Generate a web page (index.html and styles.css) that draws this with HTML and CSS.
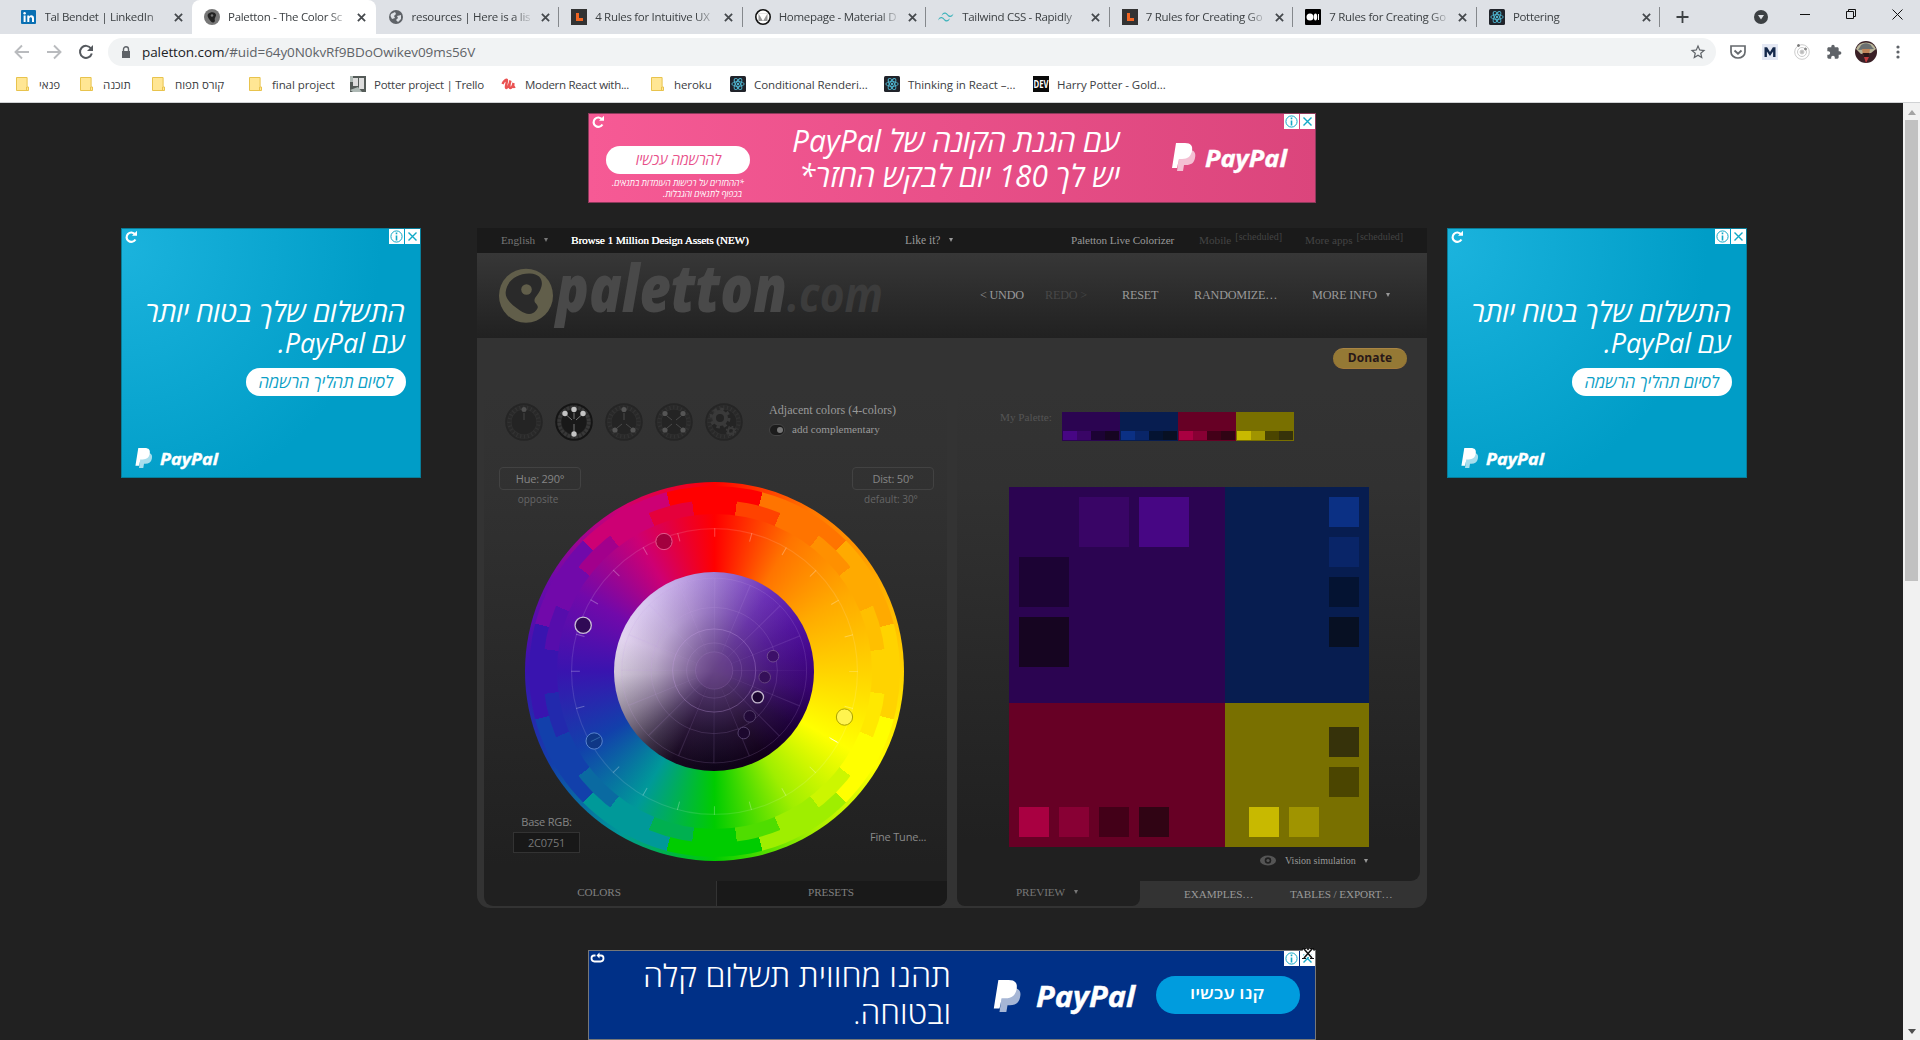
FILE: index.html
```html
<!DOCTYPE html>
<html lang="en">
<head>
<meta charset="utf-8">
<title>Paletton - The Color Scheme Designer</title>
<link rel="stylesheet" href="styles.css">
</head>
<body>
<svg class="defs" width="0" height="0">
  <symbol id="react" viewBox="0 0 16 16"><rect width="16" height="16" rx="1.500" fill="#20232a"/><g fill="none" stroke="#4fb6d0" stroke-width=".9"><ellipse cx="8" cy="8" rx="6.200" ry="2.400"/><ellipse cx="8" cy="8" rx="6.200" ry="2.400" transform="rotate(60 8 8)"/><ellipse cx="8" cy="8" rx="6.200" ry="2.400" transform="rotate(120 8 8)"/></g><circle cx="8" cy="8" r="1.200" fill="#4fb6d0"/></symbol>
  <symbol id="learnui" viewBox="0 0 16 16"><rect width="16" height="16" fill="#333"/><path d="M5 4h3v5h4v3H5z" fill="#f26522"/></symbol>
  <symbol id="cross" viewBox="0 0 8 8"><path d="M.8.8l6.400 6.400M7.200.8L.8 7.200" stroke="#45494d" stroke-width="1.600" fill="none"/></symbol>
  <symbol id="folder" viewBox="0 0 13 15"><path d="M.5 1h10.600v9.500h1.400v3.500H.5z" fill="#ffe694" stroke="#e8c34d"/><path d="M10.500 14v-3.500" stroke="#e8c34d"/></symbol>
  <symbol id="pp" viewBox="0 0 24 28"><path d="M8 7h11c4 1 5 4 4 8-1 5-4 7-9 7h-2l-1 6H5z" fill="#fff" opacity=".65"/><path d="M4 0h9c6 0 8 3 7 8s-4 8-10 8H7L5 25H0z" fill="#fff"/></symbol>
  <symbol id="adchoice" viewBox="0 0 31 15"><path d="M0 0h15v15H0zM16 0h15v15H16z" fill="#fff"/><g fill="none" stroke="#12a9c7"><circle cx="7.500" cy="7.500" r="5.600"/><path d="M19.500 3.500l8 8M27.500 3.500l-8 8" stroke-width="1.400"/><path d="M7.500 6.500v5M7.500 3.500v1.700" stroke-width="1.600"/></g></symbol>
  <symbol id="replay" viewBox="0 0 14 14"><path d="M11 4.300A4.700 4.700 0 1 0 11.400 9.500" fill="none" stroke="#fff" stroke-width="2.200"/><path d="M13 .8v5H8z" fill="#fff"/></symbol>
  <symbol id="dial" viewBox="-19 -19 38 38"><circle r="17.800" fill="none" stroke="#252525" stroke-width="2"/><circle r="14.800" fill="none" stroke="#292929" stroke-width="3.600" stroke-dasharray="2.600 1.270"/><circle r="12.500" fill="#242424"/></symbol>
</svg>

<header class="chrome">
  <div class="tabstrip">
    <div class="tab"><svg class="fav"><rect y="1" width="15" height="14" rx="1" fill="#0a70b3"/><circle cx="3.600" cy="4.300" r="1.200" fill="#fff"/><path d="M2.600 6.500h2V13h-2zM6.300 6.500h1.900v1c1.300-2 4.800-1.500 4.800 1.700V13h-2V9.700c0-2-2.700-2-2.700 0V13h-2z" fill="#fff"/></svg><span class="title">Tal Bendet | LinkedIn</span><svg class="x"><use href="#cross"/></svg></div>
    <div class="tab active"><svg class="fav"><circle cx="8" cy="8" r="8" fill="#777"/><path d="M4 5c3-3 8-2 8 1 0 2-2 3-1 6-2 3-4 1-6-2-1-2-2-3-1-5z" fill="#222"/><circle cx="8" cy="6.500" r="1.300" fill="#777"/></svg><span class="title">Paletton - The Color Sc</span><svg class="x"><use href="#cross"/></svg></div>
    <div class="tab sep"><svg class="fav"><circle cx="8" cy="8" r="7" fill="#5f6368"/><path d="M3 5l4-2 1 2-2 2 1 2-3 1-1.500-3zM9 7l4-1v4l-3 3-2-2 2-2z" fill="#dee1e6"/></svg><span class="title">resources | Here is a lis</span><svg class="x"><use href="#cross"/></svg></div>
    <div class="tab sep"><svg class="fav"><use href="#learnui"/></svg><span class="title">4 Rules for Intuitive UX</span><svg class="x"><use href="#cross"/></svg></div>
    <div class="tab sep"><svg class="fav"><circle cx="8" cy="8" r="7.200" fill="#fff" stroke="#111" stroke-width="1.600"/><path d="M3.500 4.500h9V12h-9z" fill="#999"/><path d="M3.500 4.500h9L8 12z" fill="#fff"/></svg><span class="title">Homepage - Material D</span><svg class="x"><use href="#cross"/></svg></div>
    <div class="tab sep"><svg class="fav"><path d="M3.500 7c1-4 4-4.500 6-2s4 2 6-.5c-1 4-4 4.500-6 2s-4-2-6 .5zM0 11.500c1-4 4-4.500 6-2s4 2 6-.5c-1 4-4 4.500-6 2s-4-2-6 .5z" fill="#3db3bb"/></svg><span class="title">Tailwind CSS - Rapidly</span><svg class="x"><use href="#cross"/></svg></div>
    <div class="tab sep"><svg class="fav"><use href="#learnui"/></svg><span class="title">7 Rules for Creating Go</span><svg class="x"><use href="#cross"/></svg></div>
    <div class="tab sep"><svg class="fav"><rect width="16" height="16" rx="1" fill="#000"/><circle cx="5" cy="8" r="3.500" fill="#fff"/><ellipse cx="10.500" cy="8" rx="1.700" ry="3.400" fill="#fff"/><path d="M13.500 5v6" stroke="#fff"/></svg><span class="title">7 Rules for Creating Go</span><svg class="x"><use href="#cross"/></svg></div>
    <div class="tab sep"><svg class="fav"><use href="#react"/></svg><span class="title">Pottering</span><svg class="x"><use href="#cross"/></svg></div>
    <svg class="wctl" width="259" height="34" fill="none" stroke="#111"><path d="M16.500 17h12M22.500 11v12" stroke="#3c4043" stroke-width="1.800"/><circle cx="101" cy="17" r="7" fill="#3c4043" stroke="none"/><path d="M98 15h6l-3 4.500z" fill="#dee1e6" stroke="none"/><path d="M140 14.500h10M186.500 11.500h7v7h-7zM188.500 11.500v-2h7v7h-2M232.500 9.500l10 10M242.500 9.500l-10 10"/></svg>
  </div>
  <div class="toolbar">
    <svg class="nav" width="108" height="36" fill="none" stroke="#b9bbbe" stroke-width="1.900"><path d="M29 18H16.500M22 11.500L15.500 18l6.500 6.500M47 18h12.500M54 11.500l6.500 6.500-6.500 6.500"/><path d="M91 14.500a6 6 0 1 0 .8 5" stroke="#55595e" stroke-width="2"/><path d="M93 11v6h-6z" fill="#55595e" stroke="none"/></svg>
    <div class="omnibox">
      <svg width="10" height="13"><path d="M1 5h8v7H1z" fill="#5f6368"/><path d="M2.500 5V3.300a2.500 2.500 0 0 1 5 0V5" fill="none" stroke="#5f6368" stroke-width="1.400"/></svg>
      <span class="url"><b>paletton.com</b>/#uid=64y0N0kvRf9BDoOwikev09ms56V</span>
      <svg class="star" width="18" height="18" viewBox="0 0 24 24"><path fill="#5f6368" d="M22 9.240l-7.190-.62L12 2 9.190 8.630 2 9.240l5.460 4.730L5.820 21 12 17.270 18.180 21l-1.630-7.030L22 9.240zM12 15.400l-3.760 2.270 1-4.280-3.320-2.880 4.380-.38L12 6.100l1.710 4.040 4.380.38-3.320 2.880 1 4.280L12 15.400z"/></svg>
    </div>
    <div class="ext">
      <svg viewBox="0 0 16 16"><path d="M1 2h14v6a7 6 0 0 1-14 0z" fill="none" stroke="#666a6e" stroke-width="1.700"/><path d="M4.500 6.500L8 9.700l3.500-3.200" fill="none" stroke="#666a6e" stroke-width="1.900"/></svg>
      <svg viewBox="0 0 16 16"><path d="M0 0h16v16H0z" fill="#e4e8f4"/><path d="M2.500 13V3.200h2.600L8 8l2.900-4.800h2.600V13h-2.400V7.500L8 12 4.900 7.500V13z" fill="#14284a"/></svg>
      <svg viewBox="0 0 16 16" fill="none" stroke="#ccc"><circle cx="8" cy="8" r="7.300"/><circle cx="8" cy="8" r="4.500"/><circle cx="8" cy="8" r="2" fill="#bbb"/><circle cx="4.500" cy="1.500" r="1" fill="#777" stroke="#777"/><circle cx="11.500" cy="5" r="1" fill="#888" stroke="#888"/></svg>
      <svg viewBox="0 0 24 24"><path fill="#5f6368" d="M20.500 11H19V7c0-1.100-.9-2-2-2h-4V3.500C13 2.120 11.880 1 10.500 1S8 2.120 8 3.500V5H4c-1.100 0-2 .9-2 2v3.800h1.500c1.490 0 2.700 1.210 2.700 2.700s-1.210 2.700-2.700 2.700H2V20c0 1.100.9 2 2 2h3.800v-1.500c0-1.490 1.210-2.700 2.700-2.700s2.700 1.210 2.700 2.700V22H17c1.100 0 2-.9 2-2v-4h1.500c1.380 0 2.500-1.120 2.500-2.500S21.880 11 20.500 11z"/></svg>
      <svg class="avatar" viewBox="0 0 22 22"><circle cx="11" cy="11" r="11" fill="#3a2026"/><path d="M1 8A11 11 0 0 1 21 8l-5 4-10 1z" fill="#b9b69a"/><path d="M5 6c2-5 10-5 12 0l2 2-16 1z" fill="#6b6f70"/><path d="M7 8h8l-1 6-3 2-3-2z" fill="#c08458"/><path d="M7.500 12h7l-1 4-2.500 1-2-1z" fill="#2c1718"/><path d="M9 16l2 6 3-6z" fill="#c23b3f"/></svg>
      <svg viewBox="0 0 16 16" fill="#5f6368"><circle cx="8" cy="3" r="1.600"/><circle cx="8" cy="8" r="1.600"/><circle cx="8" cy="13" r="1.600"/></svg>
    </div>
  </div>
  <nav class="bookmarks">
    <a><svg><use href="#folder"/></svg>פנאי</a>
    <a><svg><use href="#folder"/></svg>תוכנה</a>
    <a><svg><use href="#folder"/></svg>קורס תפוח</a>
    <a><svg><use href="#folder"/></svg>final project</a>
    <a class="wide"><svg><rect width="16" height="16" fill="#545b58"/><path d="M3 2h5v8H3zM9 2h5v11H9z" fill="#ddd"/><path d="M0 0h3v6H0zM0 14l8-3 4 5H3z" fill="#aeb9b5"/></svg>Potter project | Trello</a>
    <a class="wide tight"><svg><path d="M1.500 8C3 4.500 6 2.500 6 4.500S4 12 5.500 12 8 9.500 9 6.500M9.500 4.500C8 9 8 12 9.500 12s2.500-3 3-5c-.5 3-.5 5 1.500 3.500" fill="none" stroke="#ea5252" stroke-width="2.400"/></svg>Modern React with...</a>
    <a><svg><use href="#folder"/></svg>heroku</a>
    <a class="wide"><svg><use href="#react"/></svg>Conditional Renderi...</a>
    <a class="wide"><svg><use href="#react"/></svg>Thinking in React –...</a>
    <a class="wide"><svg><rect width="16" height="16" fill="#0a0a0a"/><text x=".5" y="12" class="dev" textLength="15" lengthAdjust="spacingAndGlyphs">DEV</text></svg>Harry Potter - Gold...</a>
  </nav>
</header>

<div class="viewport">
<main class="page">
  <svg class="ad leader" width="728" height="90">
    <defs><linearGradient id="pink"><stop offset="0" stop-color="#f65a95"/><stop offset="1" stop-color="#db457c"/></linearGradient></defs>
    <rect x=".5" y=".5" width="727" height="89" fill="url(#pink)" stroke="#8c3a5b"/>
    <use href="#replay" x="3" y="2" width="14" height="14"/>
    <rect x="18" y="33" width="144" height="28" rx="14" fill="#fff"/>
    <g class="he"><text x="133" y="51.500" font-size="15" fill="#e84f8a" textLength="85" lengthAdjust="spacingAndGlyphs">להרשמה עכשיו</text>
    <text x="156" y="73" font-size="9" textLength="132" lengthAdjust="spacingAndGlyphs">*ההחזרים על רכישות העומדות בתנאים.</text>
    <text x="154" y="84" font-size="9" textLength="79" lengthAdjust="spacingAndGlyphs">בכפוף לתנאים והגבלות.</text>
    <text x="532" y="39" font-size="31" textLength="328" lengthAdjust="spacingAndGlyphs">עם הגנת הקונה של PayPal</text>
    <text x="532" y="74" font-size="31" textLength="321" lengthAdjust="spacingAndGlyphs">יש לך 180 יום לבקש החזר*</text></g>
    <use href="#pp" x="584" y="30" width="24" height="28"/>
    <text class="pay" x="617" y="53.500" font-size="24" textLength="82" lengthAdjust="spacingAndGlyphs">PayPal</text>
    <use href="#adchoice" x="696" y="1" width="31" height="15"/>
  </svg>

  <div class="row">
    <svg class="ad" width="300" height="250">
      <defs><radialGradient id="cyan" gradientUnits="userSpaceOnUse" cx="0" cy="20" r="260"><stop offset="0" stop-color="#1bb3dd"/><stop offset="1" stop-color="#009dc7"/></radialGradient></defs>
      <g id="box-ad">
      <rect x=".5" y=".5" width="299" height="249" fill="url(#cyan)" stroke="#087d99"/>
      <use href="#replay" x="3" y="2" width="14" height="14"/>
      <rect x="125" y="140" width="160" height="28" rx="14" fill="#fff"/>
      <g class="he"><text x="284" y="94" font-size="28" textLength="260" lengthAdjust="spacingAndGlyphs">התשלום שלך בטוח יותר</text>
      <text x="284" y="125" font-size="28" textLength="127" lengthAdjust="spacingAndGlyphs">עם PayPal.</text>
      <text x="272" y="159.500" font-size="17" fill="#0d9fc6" textLength="134" lengthAdjust="spacingAndGlyphs">לסיום תהליך הרשמה</text></g>
      <use href="#pp" x="14" y="220" width="18" height="20"/>
      <text class="pay" x="39" y="236.500" font-size="16.500" textLength="58" lengthAdjust="spacingAndGlyphs">PayPal</text>
      <use href="#adchoice" x="268" y="1" width="31" height="15"/>
      </g>
    </svg>

    <section class="app">
      <div class="topmenu">
        <span class="m-lang">English<i class="caret"></i></span>
        <span class="m-new">Browse 1 Million Design Assets (NEW)</span>
        <span class="m-like">Like it?<i class="caret"></i></span>
        <span class="m-live">Paletton Live Colorizer</span>
        <span class="m-mob">Mobile<sup>[scheduled]</sup></span>
        <span class="m-apps">More apps<sup>[scheduled]</sup></span>
      </div>
      <div class="head">
        <svg class="logo" width="400" height="85">
          <circle cx="27" cy="42.700" r="27" fill="#615e4a"/>
          <path d="M6.700 39C8 27 19 20 31 20.500c12 .5 14 9 10 17-3 6-7 8-5 12 3 3 4 5 1 8-3 4-9 5-16 0C12 51 6 46 6.700 39z" fill="#2a2a2a"/>
          <circle cx="27.500" cy="36.500" r="5.300" fill="#615e4a"/>
          <text class="logotext" x="57" y="58.500" textLength="231" lengthAdjust="spacingAndGlyphs">paletton</text>
          <text class="logotext dim" x="288" y="58.500" textLength="96" lengthAdjust="spacingAndGlyphs">.com</text>
        </svg>
        <span class="h-undo">&lt; UNDO</span><span class="h-redo">REDO &gt;</span><span class="h-reset">RESET</span><span class="h-rand">RANDOMIZE…</span><span class="h-more">MORE INFO<i class="caret"></i></span>
      </div>
      <div class="body">
        <div class="donate-row"><span class="donate">Donate</span></div>
        <div class="panels">
          <div class="panel left">
            <div class="schemes">
              <svg viewBox="-19 -19 38 38"><use href="#dial" x="-19" y="-19" width="38" height="38"/><path d="M-.5-9h1V-2h-1z" fill="#444"/><circle cy="-12.500" r="2.500" fill="#505050"/></svg>
              <svg viewBox="-19 -19 38 38"><circle r="17.800" fill="#292929" stroke="#151515" stroke-width="2"/><circle r="14.800" fill="none" stroke="#383838" stroke-width="3.600" stroke-dasharray="2.600 1.270"/><circle r="12.500" fill="#191919"/><path d="M0-9V-3M0 2V10M-7-6.500l5 4.500M7-6.500L2-2" stroke="#777"/><g fill="#c4c4c4"><circle cy="-12.500" r="2.700"/><circle cx="-9" cy="-8.500" r="2.700"/><circle cx="9" cy="-8.500" r="2.700"/><circle cy="12" r="2.700"/></g></svg>
              <svg viewBox="-19 -19 38 38"><use href="#dial" x="-19" y="-19" width="38" height="38"/><path d="M0-9V-2M-7 6l5-4M7 6L2 2" stroke="#4a4a4a"/><g fill="#555"><circle cy="-12.500" r="2.600"/><circle cx="-9" cy="8" r="2.600"/><circle cx="9" cy="8" r="2.600"/></g></svg>
              <svg viewBox="-19 -19 38 38"><use href="#dial" x="-19" y="-19" width="38" height="38"/><path d="M-7-6l5 4M7-6L2-2M-7 6l5-4M7 6L2 2" stroke="#4a4a4a"/><g fill="#555"><circle cx="-9" cy="-8.500" r="2.600"/><circle cx="9" cy="-8.500" r="2.600"/><circle cx="-9" cy="8" r="2.600"/><circle cx="9" cy="8" r="2.600"/></g></svg>
              <svg viewBox="-19 -19 38 38"><use href="#dial" x="-19" y="-19" width="38" height="38"/><g fill="none" stroke="#3a3a3a"><circle cx="-4" cy="-4" r="6" stroke-width="4"/><circle cx="-4" cy="-4" r="9" stroke-width="3" stroke-dasharray="3.500 3.568"/><circle cx="7" cy="9" r="3" stroke-width="2"/><circle cx="7" cy="9" r="4.500" stroke-width="1.500" stroke-dasharray="1.800 1.734"/></g></svg>
              <div class="desc"><p>Adjacent colors (4-colors)</p><p class="comp"><i class="toggle"></i>add complementary</p></div>
            </div>
            <div class="wheel-area">
              <div class="corner tl"><span class="box">Hue: 290°</span><small>opposite</small></div>
              <div class="corner tr"><span class="box">Dist: 50°</span><small>default: 30°</small></div>
              <div class="corner bl"><label>Base RGB:</label><span class="input">2C0751</span></div>
              <div class="corner br">Fine Tune...</div>
              <div class="wheel">
                <div class="ring r12"></div><div class="ring r24"></div><div class="ring inner"></div><div class="ring disc"></div>
                <svg class="ring over" viewBox="102 95 1140 1140">
                  <circle cx="672" cy="665" r="430" fill="none" stroke="#fff" stroke-opacity=".12" stroke-width="3.500"/>
                  <circle cx="672" cy="665" r="418" fill="none" stroke="#fff" stroke-opacity=".28" stroke-width="26" stroke-dasharray="3 106.431" stroke-dashoffset="1.500"/>
                  <g fill="none" stroke="#c9a4e8" stroke-opacity=".17" stroke-width="3"><circle cx="671" cy="662" r="56" fill="#8050a0" fill-opacity=".22"/><circle cx="671" cy="662" r="83"/><circle cx="671" cy="662" r="125" stroke-opacity=".32"/><circle cx="671" cy="662" r="190"/><circle cx="671" cy="662" r="278"/>
                  <circle cx="671" cy="662" r="167" stroke-width="222" stroke-opacity=".14" stroke-dasharray="2.500 63.080" stroke-dashoffset="1.250"/></g>
                  <g stroke-width="3"><circle cx="277" cy="526" r="24.500" fill="#300a56" stroke="#c9bcd6" stroke-width="4"/><circle cx="520" cy="274" r="24.500" fill="#a3003e" stroke="#e45b8e"/><circle cx="310" cy="874" r="24.500" fill="#0f3786" stroke="#5a86cf"/><path d="M300 876l28-14" stroke="#2f66a8"/><circle cx="1063" cy="802" r="24.500" fill="#fff44f" stroke="#a9a000"/><path d="M1018 864l24 14" stroke="#fff" stroke-opacity=".8"/>
                  <circle cx="848" cy="619" r="17.500" fill="#3d1069" stroke="#6f4a92"/><circle cx="823" cy="682" r="17.500" fill="#351059" stroke="#64447f"/><circle cx="802" cy="742" r="17.500" fill="#1b0630" stroke="#c0b4cb" stroke-width="4"/><circle cx="778" cy="800" r="17.500" fill="#220a38" stroke="#54406a"/><circle cx="760" cy="850" r="17.500" fill="#1c082e" stroke="#54406a"/></g>
                </svg>
              </div>
            </div>
            <div class="ltabs"><span>COLORS</span><span class="off">PRESETS</span></div>
          </div>
          <div class="rightcol">
            <div class="panel right">
              <div class="mypal"><span>My Palette:</span>
                <div class="chip pu"><i></i><i></i><i></i><i></i></div><div class="chip bl2"><i></i><i></i><i></i><i></i></div><div class="chip re"><i></i><i></i><i></i><i></i></div><div class="chip ye"><i></i><i></i><i></i><i></i></div>
              </div>
              <div class="preview">
                <div class="q pu"><i></i><i></i><i></i><i></i></div><div class="q bl2"><i></i><i></i><i></i><i></i></div><div class="q re"><i></i><i></i><i></i><i></i></div><div class="q ye"><i></i><i></i><i></i><i></i></div>
              </div>
              <div class="vision"><svg width="16" height="11"><ellipse cx="8" cy="5.500" rx="8" ry="5" fill="#555"/><circle cx="8" cy="5.500" r="3.300" fill="#202020"/><circle cx="8" cy="5.500" r="1.600" fill="#555"/></svg><span>Vision simulation</span><i class="caret"></i></div>
            </div>
            <div class="rtabs"><span class="on">PREVIEW<i class="caret"></i></span><span class="t-ex">EXAMPLES…</span><span class="t-tab">TABLES / EXPORT…</span></div>
          </div>
        </div>
      </div>
    </section>

    <svg class="ad second" width="300" height="250"><use href="#box-ad"/></svg>
  </div>

  <svg class="ad bottom" width="728" height="90">
    <rect x=".5" y=".5" width="727" height="89" fill="#003087" stroke="#777"/>
    <path d="M7.500 5.500H6c-2 0-2.500 1-2.500 2.800 0 2.200 1 3.200 3 3.200h6c2 0 3-1 3-3.200 0-1.800-.5-2.800-2.500-2.800h-2" fill="none" stroke="#fff" stroke-width="1.800"/><path d="M11.500 2.500v6l-3-3z" fill="#fff"/>
    <g class="he up"><text x="363" y="36.500" font-size="31" textLength="308" lengthAdjust="spacingAndGlyphs">תהנו מחווית תשלום קלה</text>
    <text x="363" y="74" font-size="31" textLength="98" lengthAdjust="spacingAndGlyphs">ובטוחה.</text></g>
    <use href="#pp" x="405" y="30" width="29" height="32"/>
    <text class="pay" x="448" y="56.500" font-size="28" textLength="99" lengthAdjust="spacingAndGlyphs">PayPal</text>
    <rect x="568" y="26" width="144" height="38" rx="19" fill="#009cde"/>
    <g class="he up"><text x="676" y="49" font-size="16" textLength="74" font-weight="600" lengthAdjust="spacingAndGlyphs">קנו עכשיו</text></g>
    <use href="#adchoice" x="696" y="1" width="31" height="15"/>
    <path d="M716-1l8 9M724-1l-8 9" stroke="#fff" stroke-width="4"/><path d="M716-1l8 9M724-1l-8 9" stroke="#111" stroke-width="1.600"/><path d="M714-1.500h4M722-1.500h4M714 8.500h4M722 8.500h4" stroke="#111"/>
  </svg>
</main>
<div class="scrollbar"><i class="up"></i><i class="thumb"></i><i class="down"></i></div>
</div>
</body>
</html>
```
FILE: styles.css
```css
* { box-sizing: border-box; }
body { margin: 0; width: 1920px; height: 1040px; overflow: hidden; display: flex; flex-direction: column; font-family: "Open Sans", "Noto Sans", sans-serif; font-size: 12px; background: #212121; }
.defs { position: absolute; }
p { margin: 0; }

/* browser frame */
.chrome { height: 103px; background: #fff; border-bottom: 1px solid #d0d2d4; color: #3c4043; flex: none; }
.tabstrip { height: 34px; background: #dee1e6; display: flex; padding-left: 8.500px; }
.tab { width: 183.550px; height: 34px; display: flex; align-items: center; padding: 0 11px 0 12px; position: relative; flex: none; }
.tab .fav { width: 16px; height: 16px; margin-right: 8px; flex: none; }
.tab .title { width: 123px; white-space: nowrap; overflow: hidden; font-size: 11.500px; letter-spacing: -.3px; flex: none; margin-right: 6px; line-height: 20px; mask-image: linear-gradient(90deg, #000 82%, transparent 99%); }
.tab .x { width: 9px; height: 9px; flex: none; }
.tab.active { background: #fff; border-radius: 8px 8px 0 0; }
.tab.sep::after { content: ""; position: absolute; right: 0; top: 7px; height: 20px; width: 1px; background: #85888c; }
.wctl { flex: none; }
.toolbar { height: 36px; display: flex; align-items: center; }
.omnibox { width: 1608px; height: 28px; background: #f1f3f4; border-radius: 14px; display: flex; align-items: center; padding: 0 9px 0 13px; }
.omnibox svg { width: 10px; }
.url { margin-left: 11px; font-size: 13.500px; letter-spacing: -.09px; line-height: 18px; padding-bottom: 1px; color: #5f6368; flex: 1; }
.url b { font-weight: 400; color: #202124; }
.omnibox .star { width: 18px; }
.ext { display: flex; align-items: center; gap: 16px; margin-left: 14px; }
.ext svg { width: 16px; height: 16px; }
.ext .avatar { width: 22px; height: 22px; margin: 0 -3px; }
.bookmarks { height: 32px; display: flex; align-items: center; padding-left: 16px; padding-bottom: 4px; font-size: 11.500px; letter-spacing: -.07px; white-space: nowrap; }
.bookmarks a { display: flex; align-items: center; flex: none; width: 64px; }
.bookmarks svg { width: 13px; height: 16px; margin-right: 10px; flex: none; }
.bookmarks .wide svg { width: 16px; margin-right: 8px; }
.bookmarks .tight { letter-spacing: -.3px; }
.bookmarks a:nth-child(2) { width: 72px; }
.bookmarks a:nth-child(3) { width: 97px; }
.bookmarks a:nth-child(4) { width: 101px; }
.bookmarks a:nth-child(5) { width: 151px; letter-spacing: -.28px; }
.bookmarks a:nth-child(6) { width: 150px; }
.bookmarks a:nth-child(7) { width: 79px; }
.bookmarks a:nth-child(8) { width: 154px; }
.bookmarks a:nth-child(9) { width: 149px; }
.bookmarks a:nth-child(10) { width: 150px; }
.dev { font-size: 10px; font-weight: 700; fill: #fff; letter-spacing: 0; }

/* page */
.viewport { display: flex; flex: 1; min-height: 0; }
.page { flex: 1; padding-top: 10px; background: #212121; overflow: hidden; }
.ad { display: block; flex: none; }
.leader, .bottom { margin-left: 588px; }
.bottom { margin-top: 42px; overflow: visible; }
.row { display: flex; align-items: flex-start; margin: 25px 0 0 121px; }
.second { margin-left: 20px; }
.he { direction: rtl; font-family: "Open Sans", "DejaVu Sans", sans-serif; font-style: italic; fill: #fff; }
.he.up { font-style: normal; font-weight: 300; }
.pay { font-weight: 700; font-style: italic; fill: #fff; stroke: #fff; stroke-width: .4px; }
.scrollbar { width: 17px; background: #f1f1f1; display: flex; flex-direction: column; align-items: center; }
.scrollbar .up { border: 4px solid transparent; border-bottom: 5px solid #a3a3a3; border-top: 0; margin: 7px 0 5px; }
.scrollbar .thumb { width: 13px; height: 461px; background: #c1c1c1; }
.scrollbar .down { border: 4px solid transparent; border-top: 5px solid #505050; border-bottom: 0; margin: auto 0 6px; }

/* application */
.app { width: 950px; height: 680px; margin-left: 56px; flex: none; font-family: "Liberation Serif", serif; color: #999; }
.caret { display: inline-block; border: 2.500px solid transparent; border-top: 4px solid currentColor; border-bottom: 0; vertical-align: 2px; margin-left: 9px; }
.topmenu { height: 25px; background: #1a1a1a; display: flex; align-items: center; padding: 0 0 1px 24px; font-size: 11.200px; white-space: nowrap; }
.topmenu span { flex: none; }
.topmenu .m-lang { width: 70px; color: #777; }
.topmenu .m-new { width: 334px; color: #fff; text-shadow: .3px 0 #fff; letter-spacing: -.08px; }
.topmenu .m-like { width: 166px; font-size: 11.500px; }
.topmenu .m-live { width: 128px; letter-spacing: -.08px; }
.topmenu .m-mob { width: 106px; color: #444; }
.topmenu .m-apps { color: #444; }
sup { font-size: 10px; vertical-align: 4px; line-height: 0; margin-left: 4px; }
.head { height: 85px; background: linear-gradient(#373737, #212121); display: flex; align-items: center; padding-left: 22px; font-size: 12.200px; white-space: nowrap; letter-spacing: -.2px; }
.logo { margin-right: 81px; flex: none; }
.logotext { font: italic 800 66px "Open Sans", sans-serif; fill: #494949; letter-spacing: 0; }
.logotext.dim { fill: #3c3c3c; font-size: 49px; font-weight: 700; }
.head span { flex: none; }
.h-undo { width: 65px; }
.h-redo { width: 77px; color: #484848; }
.h-reset { width: 72px; }
.h-rand { width: 118px; }
.body { height: 570px; background: #333; border-radius: 0 0 13px 13px; padding: 10px 7px 0; }
.donate-row { display: flex; justify-content: flex-end; padding-right: 13px; height: 42px; }
.donate { width: 74px; height: 21px; border-radius: 10.500px; background: #957935; border-top: 1px solid #a98544; border-bottom: 1px solid #a5793a; color: #281818; font: 700 12px/18px "Open Sans", sans-serif; letter-spacing: .1px; text-align: center; }
.panels { display: flex; gap: 10px; height: 516px; }
.panel { background: linear-gradient(#333, #313131 20%, #202020 92%); }
.left { width: 463px; height: 516px; border-radius: 0 0 9px 9px; overflow: hidden; font-size: 12px; }
.schemes { height: 73px; padding: 13px 0 0 21px; display: flex; gap: 12px; }
.schemes svg { width: 38px; height: 38px; flex: none; }
.desc { margin-left: 14px; font-size: 12.100px; white-space: nowrap; }
.desc p { line-height: 14px; }
.desc .comp { font-size: 11.100px; line-height: 16px; margin-top: 4px; display: flex; align-items: center; }
.toggle { width: 16px; height: 12px; border: 1.500px solid #444; border-radius: 6px; background: #1c1c1c; margin: 2px 7px 0 0; display: flex; justify-content: flex-end; align-items: center; padding-right: 1px; }
.toggle::after { content: ""; width: 6px; height: 6px; border-radius: 50%; background: #777; }
.wheel-area { height: 418px; position: relative; font: 11px "Open Sans", sans-serif; color: #858585; letter-spacing: -.2px; }
.wheel { position: absolute; left: 40.500px; top: 18.500px; width: 379px; height: 379px; border-radius: 50%; background: var(--smooth);
  --smooth: conic-gradient(#f00, #ff7400, #fa0, #ffd300, #ff0, #9fee00, #0c0, #099, #1240ab, #3914af, #7109aa, #cd0074, #f00); }
.ring { position: absolute; inset: 0; border-radius: 50%; }
.r12 { inset: 4px; background: conic-gradient(#f00 15deg, #ff7400 0 45deg, #fa0 0 75deg, #ffd300 0 105deg, #ff0 0 135deg, #9fee00 0 165deg, #0c0 0 195deg, #099 0 225deg, #1240ab 0 255deg, #3914af 0 285deg, #7109aa 0 315deg, #cd0074 0 345deg, #f00 0); }
.r24 { inset: 18px; background: conic-gradient(#f00 7.500deg, #ff4200 0 22.500deg, #ff7400 0 37.500deg, #ff9000 0 52.500deg, #fa0 0 67.500deg, #ffbf00 0 82.500deg, #ffd300 0 97.500deg, #ffe800 0 112.500deg, #ff0 0 127.500deg, #ccf600 0 142.500deg, #9fee00 0 157.500deg, #4fdd00 0 172.500deg, #0c0 0 187.500deg, #00b050 0 202.500deg, #099 0 217.500deg, #0a6aa1 0 232.500deg, #1240ab 0 247.500deg, #2229ad 0 262.500deg, #3914af 0 277.500deg, #560dac 0 292.500deg, #7109aa 0 307.500deg, #a2008c 0 322.500deg, #cd0074 0 337.500deg, #e5003b 0 352.500deg, #f00 0); }
.ring.inner { inset: 32px; background: var(--smooth); }
.disc { inset: 90px 90px 90px 89px; background: radial-gradient(circle, #60407f 0%, #60407fb0 18%, #60407f44 42%, #60407f00 68%), conic-gradient(#a27fd4 0deg, #6c30b8 35deg, #5213a0 60deg, #43078a 80deg, #37046f 100deg, #1c0038 125deg, #100018 150deg, #0e0418 180deg, #17091f 205deg, #3d3247 222deg, #8f8497 245deg, #cfc6d6 268deg, #e2d4ef 290deg, #d8c6f0 315deg, #bfa3e3 340deg, #a27fd4 360deg); }
.corner { position: absolute; display: flex; flex-direction: column; align-items: center; white-space: nowrap; }
.tl { left: 15px; top: 4px; }
.tr { left: 368px; top: 4px; }
.bl { left: 29px; top: 348.500px; }
.br { left: 386px; top: 366px; color: #8a8a8a; }
.box { width: 82px; height: 23px; border: 1px solid #424242; border-radius: 4px; text-align: center; line-height: 21px; }
.corner small { font-size: 10px; line-height: 19px; color: #666; letter-spacing: 0; margin-right: 4px; }
.bl label { line-height: 20px; }
.input { width: 67px; height: 21px; background: #181818; border: 1px solid #333; text-align: center; line-height: 19px; color: #777; }
.ltabs { display: flex; height: 25px; line-height: 22px; text-align: center; color: #808080; font-size: 11.200px; letter-spacing: -.1px; }
.ltabs span { width: 232px; padding-right: 2px; }
.ltabs .off { background: #191919; border-left: 1px solid #333; width: 231px; }
.rightcol { width: 463px; }
.right { height: 491px; border-radius: 0 0 9px 0; padding-top: 22px; }
.mypal { display: flex; height: 75px; padding-left: 43px; font-size: 11.200px; color: #555; line-height: 10px; }
.mypal span { width: 62px; }
.chip { width: 58px; height: 29px; padding: 19px 1px 1px; display: flex; background: var(--c); }
.chip i { flex: 1; height: 9px; }
.pu { --c: #2b0451; --a: #470684; --b: #390566; --d: #1c0334; --e: #160521; }
.bl2 { --c: #071d50; --a: #0b3084; --b: #092568; --d: #041332; --e: #071023; }
.re { --c: #670025; --a: #a90041; --b: #880034; --d: #430018; --e: #300414; }
.ye { --c: #797000; --a: #c8b900; --b: #a09400; --d: #4b4500; --e: #36320a; }
.chip i:nth-child(1), .q i:nth-child(1) { background: var(--a); }
.chip i:nth-child(2), .q i:nth-child(2) { background: var(--b); }
.chip i:nth-child(3), .q i:nth-child(3) { background: var(--d); }
.chip i:nth-child(4), .q i:nth-child(4) { background: var(--e); }
.preview { display: grid; grid-template: 216px 144px / 216px 144px; margin-left: 52px; width: 360px; }
.q { background: var(--c); padding: 10px; display: flex; gap: 10px; }
.q i { width: 30px; height: 30px; }
.q.pu { display: grid; grid-template: repeat(3, 50px) / repeat(3, 50px); }
.q.pu i { width: 50px; height: 50px; }
.q.pu i:nth-child(1) { grid-area: 1 / 3; }
.q.pu i:nth-child(2) { grid-area: 1 / 2; }
.q.pu i:nth-child(3) { grid-area: 2 / 1; }
.q.pu i:nth-child(4) { grid-area: 3 / 1; }
.q.bl2 { flex-direction: column; align-items: flex-end; }
.q.re { align-items: flex-end; }
.q.ye { display: grid; grid-template: repeat(3, 30px) / repeat(3, 30px); padding: 24px 10px 10px 24px; }
.q.ye i:nth-child(1) { grid-area: 3 / 1; }
.q.ye i:nth-child(2) { grid-area: 3 / 2; }
.q.ye i:nth-child(3) { grid-area: 2 / 3; }
.q.ye i:nth-child(4) { grid-area: 1 / 3; }
.vision { display: flex; align-items: center; padding-left: 303px; height: 27px; font-size: 10px; white-space: nowrap; }
.vision span { margin-left: 9px; width: 72px; }
.vision .caret { margin-left: 7px; }
.rtabs { display: flex; height: 25px; font-size: 11.200px; letter-spacing: -.1px; line-height: 27px; white-space: nowrap; }
.rtabs .on { width: 183px; height: 25px; background: #202020; border-radius: 0 0 8px 8px; padding-left: 59px; line-height: 22px; color: #777; }
.t-ex { margin-left: 44px; width: 106px; }
```
